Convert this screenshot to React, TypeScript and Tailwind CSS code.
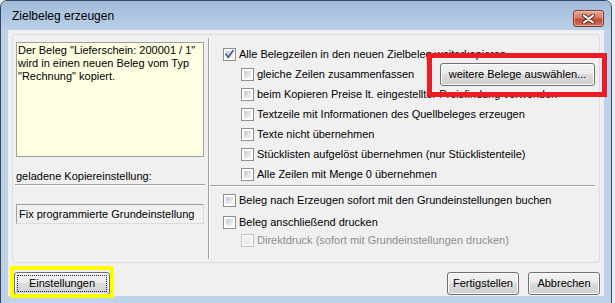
import React from "react";

function Check({ checked = false, disabled = false }: { checked?: boolean; disabled?: boolean }) {
  return (
    <span
      className={
        disabled
          ? "relative inline-flex w-[13px] h-[13px] shrink-0 border border-[#c4c4c4] bg-[#f7f7f7] p-[2px]"
          : "relative inline-flex w-[13px] h-[13px] shrink-0 border border-[#8e8f8f] bg-white p-[2px]"
      }
    >
      <span
        className={
          disabled
            ? "block w-full h-full bg-[#ececec]"
            : "block w-full h-full bg-linear-to-br from-[#bfc4ca] via-[#dfe1e4] to-[#f6f6f6]"
        }
      />
      {checked && (
        <svg className="absolute left-[-1px] top-[-1px]" width="13" height="13" viewBox="0 0 13 13">
          <path d="M3 6.2 L5.3 9.2 L10 2.6" fill="none" stroke="#4a5e96" strokeWidth="1.7" strokeLinecap="square" />
        </svg>
      )}
    </span>
  );
}

function Row({
  label,
  indent = false,
  checked = false,
  disabled = false,
  children,
}: {
  label: string;
  indent?: boolean;
  checked?: boolean;
  disabled?: boolean;
  children?: React.ReactNode;
}) {
  return (
    <div className={indent ? "flex items-center h-[20px] pl-[31px] gap-[3px]" : "flex items-center h-[20px] pl-[13px] gap-[3px]"}>
      <Check checked={checked} disabled={disabled} />
      <span className={disabled ? "text-[#8d8d8d] whitespace-nowrap" : "text-black whitespace-nowrap"}>{label}</span>
      {children}
    </div>
  );
}

function Row18({
  label,
  indent = false,
  disabled = false,
  className = "",
}: {
  label: string;
  indent?: boolean;
  disabled?: boolean;
  className?: string;
}) {
  return (
    <div className={(indent ? "flex items-center h-[18px] pl-[31px] gap-[3px] " : "flex items-center h-[18px] pl-[13px] gap-[3px] ") + className}>
      <Check disabled={disabled} />
      <span className={disabled ? "text-[#8d8d8d] whitespace-nowrap" : "text-black whitespace-nowrap"}>{label}</span>
    </div>
  );
}

const btn =
  "flex items-center justify-center h-[23px] border border-[#707070] rounded-[3px] bg-[linear-gradient(to_bottom,#f2f2f2_0%,#ebebeb_50%,#dddddd_50%,#cfcfcf_100%)] shadow-[inset_0_0_0_1px_#fcfcfc] text-black";

export default function App() {
  return (
    <div className="relative w-[615px] h-[303px] overflow-hidden bg-[#e9ecef] font-['Liberation_Sans',Arial,sans-serif] text-[11px] leading-[13px]">
      <div className="w-[612px] h-[310px] border border-[#34475e] rounded-t-[7px] bg-[#bed3ea] flex flex-col overflow-hidden">
        {/* title bar */}
        <div className="h-[29px] shrink-0 flex items-start bg-linear-to-b from-[#a2bcd9] to-[#b9d0e8]">
          <div className="pl-[11px] pt-[8px] text-[12px] leading-[15px] text-black">Zielbeleg erzeugen</div>
          <div className="ml-auto mr-[7px] mt-[9px] w-[31px] h-[17px] rounded-[3px] border border-[#7a3b31] bg-[linear-gradient(to_bottom,#e8a696_0%,#d47b66_45%,#c24a31_55%,#d0735c_100%)] flex items-center justify-center shadow-[inset_0_0_0_1px_rgba(255,220,210,0.5)]">
            <svg width="13" height="10" viewBox="0 0 13 10">
              <path d="M2 1.5 L11 8.5 M11 1.5 L2 8.5" stroke="#5a2a22" strokeWidth="4" strokeLinecap="round" />
              <path d="M2 1.5 L11 8.5 M11 1.5 L2 8.5" stroke="#ffffff" strokeWidth="2.2" strokeLinecap="round" />
            </svg>
          </div>
        </div>
        {/* content */}
        <div className="mx-[7px] h-[266px] shrink-0 bg-[#f0f0f0] flex flex-col">
          <div className="mx-[4px] mt-[4px] h-[229px] border border-[#d5dfe5] rounded-[3px] flex">
            {/* left column */}
            <div className="w-[195px] shrink-0 pt-[7px] pl-[3px] pr-[4px] flex flex-col">
              <div className="h-[115px] border border-[#a0a0a0] bg-[#ffffe1] px-[1px] pt-[1px] text-black">
                Der Beleg "Lieferschein: 200001 / 1"
                <br />
                wird in einen neuen Beleg vom Typ
                <br />
                "Rechnung" kopiert.
              </div>
              <div className="mt-[13px] h-[13px] whitespace-nowrap">geladene Kopiereinstellung:</div>
              <div className="mt-[1px] -mx-[1px] h-[2px] border-t border-[#a0a0a0] border-b border-b-white" />
              <div className="mt-[18px] h-[20px] border border-[#a0a0a0] border-r-[#dcdcdc] border-b-[#dcdcdc] flex items-center pl-[2px] whitespace-nowrap">
                Fix programmierte Grundeinstellung
              </div>
            </div>
            {/* divider */}
            <div className="w-[2px] shrink-0 my-[3px] border-l border-[#a0a0a0] border-r border-r-white" />
            {/* right column */}
            <div className="flex-1 pt-[9px] pr-[4px] flex flex-col">
              <Row label="Alle Belegzeilen in den neuen Zielbeleg weiterkopieren" checked />
              <Row label="gleiche Zeilen zusammenfassen" indent>
                <div className={btn + " ml-auto w-[155px] h-[20px]"}>weitere Belege auswählen...</div>
              </Row>
              <Row label="beim Kopieren Preise lt. eingestellter Preisfindung verwenden" indent />
              <Row label="Textzeile mit Informationen des Quellbeleges erzeugen" indent />
              <Row label="Texte nicht übernehmen" indent />
              <Row label="Stücklisten aufgelöst übernehmen (nur Stücklistenteile)" indent />
              <Row label="Alle Zeilen mit Menge 0 übernehmen" indent />
              <div className="mt-[1px] h-[2px] border-t border-[#a0a0a0] border-b border-b-white" />
              <Row18 label="Beleg nach Erzeugen sofort mit den Grundeinstellungen buchen" className="mt-[4px]" />
              <Row18 label="Beleg anschließend drucken" className="mt-[4px]" />
              <Row18 label="Direktdruck (sofort mit Grundeinstellungen drucken)" indent disabled />
            </div>
          </div>
          {/* bottom buttons */}
          <div className="mt-[9px] flex pl-[6px] pr-[4px]">
            <div className={btn + " w-[96px] relative"}>
              <span className="absolute inset-[2px] border border-dotted border-[#1b2a5a]" />
              Einstellungen
            </div>
            <div className={btn + " ml-auto w-[72px]"}>Fertigstellen</div>
            <div className={btn + " ml-[9px] w-[72px]"}>Abbrechen</div>
          </div>
        </div>
      </div>
      {/* annotations */}
      <div className="absolute left-[427px] top-[53px] w-[180px] h-[44px] border-[5px] border-[#ed1c24]" />
      <div className="absolute left-[10px] top-[266px] w-[104px] h-[32px] border-4 border-[#ffff00]" />
    </div>
  );
}
